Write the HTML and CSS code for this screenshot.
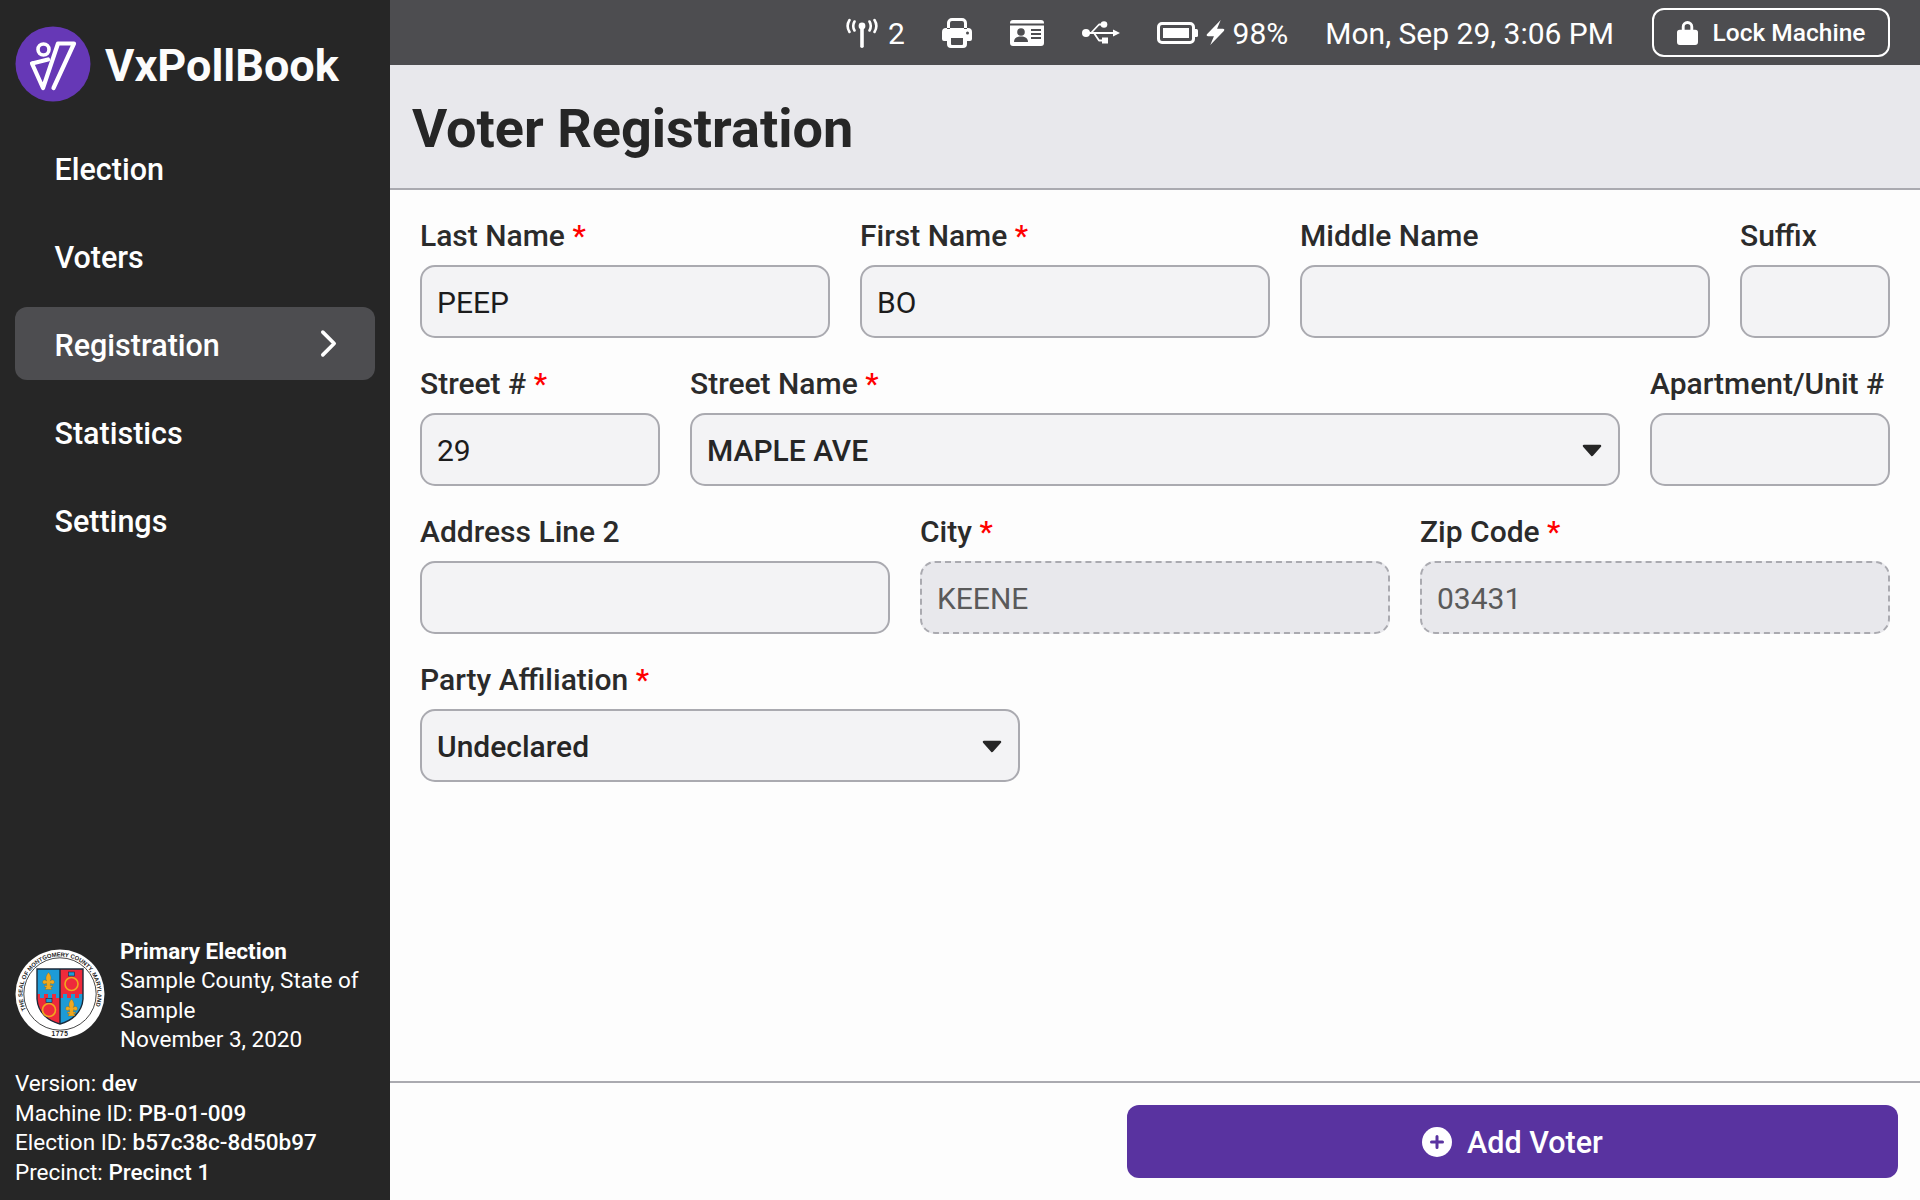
FILE: index.html
```html
<!DOCTYPE html>
<html lang="en">
<head>
<meta charset="utf-8">
<title>VxPollBook</title>
<link rel="stylesheet" href="styles.css">
</head>
<body>
<div class="app">
  <aside class="sidebar">
    <div class="brand">
      <svg class="logo" viewBox="0 0 76 76" width="76" height="76">
        <circle cx="38" cy="38" r="37.5" fill="#6638b6"/>
        <circle cx="28.500" cy="23.500" r="5.500" fill="none" stroke="#fff" stroke-width="3.600"/>
        <path d="M17 37.500 33 33.500M17 37.500 28 62 43 17.500H59L38.500 62" fill="none" stroke="#fff" stroke-width="4.200" stroke-linecap="round" stroke-linejoin="round"/>
      </svg>
      <span class="brand-name">VxPollBook</span>
    </div>
    <nav class="nav">
      <a class="nav-item">Election</a>
      <a class="nav-item">Voters</a>
      <a class="nav-item active">Registration
        <svg viewBox="0 0 20 30" width="19" height="29"><path d="M4 3 16 15 4 27" fill="none" stroke="#fff" stroke-width="3.800" stroke-linecap="round" stroke-linejoin="round"/></svg>
      </a>
      <a class="nav-item">Statistics</a>
      <a class="nav-item">Settings</a>
    </nav>
    <div class="side-foot">
      <div class="election">
        <svg class="seal" viewBox="0 0 90 90" width="90" height="90">
          <defs>
            <path id="sealArc" d="M11 60.800A37.500 37.500 0 1 1 79 60.800"/>
          </defs>
          <circle cx="45" cy="45" r="44.500" fill="#fff"/>
          <circle cx="45" cy="45" r="36.200" fill="none" stroke="#333" stroke-width=".9"/>
          <text class="seal-text"><textPath href="#sealArc" textLength="146">THE SEAL OF MONTGOMERY COUNTY, MARYLAND</textPath></text>
          <text class="seal-year" x="45" y="87" text-anchor="middle">1775</text>
          <path d="M22 20H45V49H41V45H37V49H33V45H29V49H25V45H22Z" fill="#1d9bd7"/>
          <path d="M45 20H68V45H64V49H60V45H56V49H52V45H48V49H45Z" fill="#ee2a3b"/>
          <path d="M22 45H25V49H29V45H33V49H37V45H41V49H45V75C33 72 23 64 22 50Z" fill="#ee2a3b"/>
          <path d="M45 49H48V45H52V49H56V45H60V49H64V45H68V50C67 64 56 72 45 75Z" fill="#1d9bd7"/>
          <path d="M22 20H68V50C67 64 56 72 45 75 33 72 23 64 22 50ZM45 20V75" fill="none" stroke="#1a2a3a" stroke-width="1.400"/>
          <path class="fleur" d="M33.500 23.500C36.500 27 36.500 30 35.200 32 37.500 30 39.800 31 39.300 34 38 35.800 36.200 34.800 35.700 34L35.200 36.500H37.500V38H35.700L37 40.500H30L31.300 38H29.500V36.500H31.800L31.300 34C30.800 34.800 29 35.800 27.700 34 27.200 31 29.500 30 31.800 32 30.500 30 30.500 27 33.500 23.500Z"/>
          <path class="fleur" d="M56.500 50C59.500 53.500 59.500 56.500 58.200 58.500 60.500 56.500 62.800 57.500 62.300 60.500 61 62.300 59.200 61.300 58.700 60.500L58.200 63H60.500V64.500H58.700L60 67H53L54.300 64.500H52.500V63H54.800L54.300 60.500C53.800 61.300 52 62.300 50.700 60.500 50.200 57.500 52.500 56.500 54.800 58.500 53.500 56.500 53.500 53.500 56.500 50Z"/>
          <circle cx="56.500" cy="35" r="6.500" fill="none" stroke="#f0a81e" stroke-width="1.600"/>
          <rect x="53.500" y="23" width="6" height="4" fill="#1d9bd7" stroke="#1a2a3a" stroke-width=".6"/>
          <circle cx="34" cy="61" r="6.500" fill="none" stroke="#f0a81e" stroke-width="1.600"/>
          <rect x="31" y="49.500" width="6" height="4" fill="#1d9bd7" stroke="#1a2a3a" stroke-width=".6"/>
        </svg>
        <div class="election-text">
          <strong>Primary Election</strong><br>
          Sample County, State of Sample<br>
          November 3, 2020
        </div>
      </div>
      <div class="meta">
        <div>Version: <b>dev</b></div>
        <div>Machine ID: <b>PB-01-009</b></div>
        <div>Election ID: <b>b57c38c-8d50b97</b></div>
        <div>Precinct: <b>Precinct 1</b></div>
      </div>
    </div>
  </aside>
  <div class="main">
    <header class="topbar">
      <div class="status">
        <span class="stat-pair">
          <svg viewBox="0 0 34 30" width="34" height="30"><g fill="none" stroke="#fff" stroke-width="2.600" stroke-linecap="round"><path d="M4.500 2C2 6 2 10 4.500 14M9.500 3.500C7.800 6.500 7.800 9.500 9.500 12.500M29.500 2C32 6 32 10 29.500 14M24.500 3.500C26.200 6.500 26.200 9.500 24.500 12.500"/></g><circle cx="17" cy="8" r="3.400" fill="#fff"/><rect x="15.200" y="8" width="3.600" height="22" rx="1.800" fill="#fff"/></svg>
          <span class="stat-text">2</span>
        </span>
        <svg class="nudge" viewBox="0 0 30 30" width="30" height="30"><path fill="#fff" d="M5 11V5a5 5 0 0 1 5-5H20a5 5 0 0 1 5 5V11H22V5a2 2 0 0 0-2-2H10A2 2 0 0 0 8 5V11ZM4 10H26a4 4 0 0 1 4 4V21a2 2 0 0 1-2 2H25V26a4 4 0 0 1-4 4H9a4 4 0 0 1-4-4V23H2a2 2 0 0 1-2-2V14a4 4 0 0 1 4-4ZM9 20V26a1 1 0 0 0 1 1H20a1 1 0 0 0 1-1V20Z" fill-rule="evenodd"/><circle cx="25.500" cy="15" r="1.500" fill="#4d4d50"/></svg>
        <svg viewBox="0 0 34 26" width="34" height="26"><path fill="#fff" d="M3 0H31a3 3 0 0 1 3 3V3.500H0V3a3 3 0 0 1 3-3ZM0 5.500H34V23a3 3 0 0 1-3 3H3a3 3 0 0 1-3-3Z"/><circle cx="11" cy="12" r="3.800" fill="#4d4d50"/><path fill="#4d4d50" d="M4 22C4 18 7 16.500 11 16.500S18 18 18 22ZM21 9H31V11H21ZM21 13H31V15H21ZM21 17H31V19H21Z"/></svg>
        <svg viewBox="0 0 38 23" width="38" height="23"><g fill="none" stroke="#fff" stroke-width="1.800" stroke-linejoin="round"><path d="M3 12H33M9 12 17 3.500H21M12 12 17 19.500H21"/></g><circle cx="4" cy="12" r="4" fill="#fff"/><circle cx="22" cy="3.500" r="3.300" fill="#fff"/><rect x="20" y="16.500" width="6" height="6" fill="#fff"/><path fill="#fff" d="M31 8.500 38 12 31 15.500Z"/></svg>
        <span class="stat-pair battery">
          <svg viewBox="0 0 41 22" width="41" height="22"><rect x="1.500" y="1.500" width="35" height="19" rx="3.500" fill="none" stroke="#fff" stroke-width="3"/><rect x="6" y="6" width="26" height="10" fill="#fff"/><path d="M38 7H39.500A1.500 1.500 0 0 1 41 8.500V13.500A1.500 1.500 0 0 1 39.500 15H38Z" fill="#fff"/></svg>
          <svg viewBox="0 0 18 24" width="19" height="25"><path fill="#fff" d="M14 0 1 13.500C0 14.500.500 15.500 2 15.500H7.500L4 24 17 10.500C18 9.500 17.500 8.500 16 8.500H10.500Z"/></svg>
          <span class="stat-text">98%</span>
        </span>
      </div>
      <span class="clock">Mon, Sep 29, 3:06 PM</span>
      <button class="lock-btn" type="button">
        <svg viewBox="0 0 22 26" width="21" height="25"><path fill="#fff" d="M5 11V7a6 6 0 0 1 12 0v4h-3V7a3 3 0 0 0-6 0v4ZM3 10H19a3 3 0 0 1 3 3V23a3 3 0 0 1-3 3H3a3 3 0 0 1-3-3V13a3 3 0 0 1 3-3Z"/></svg>
        Lock Machine
      </button>
    </header>
    <div class="page-head"><h1>Voter Registration</h1></div>
    <form class="form">
      <div class="row row-name">
        <label class="field"><span class="lbl">Last Name <i>*</i></span><input class="input" value="PEEP"></label>
        <label class="field"><span class="lbl">First Name <i>*</i></span><input class="input" value="BO"></label>
        <label class="field"><span class="lbl">Middle Name</span><input class="input"></label>
        <label class="field"><span class="lbl">Suffix</span><input class="input"></label>
      </div>
      <div class="row row-street">
        <label class="field"><span class="lbl">Street # <i>*</i></span><input class="input" value="29"></label>
        <div class="field"><span class="lbl">Street Name <i>*</i></span><div class="input select">MAPLE AVE<svg class="caret" viewBox="0 0 20 13" width="20" height="13"><path d="M2 2H18L10 11Z" fill="#262626" stroke="#262626" stroke-width="2.500" stroke-linejoin="round"/></svg></div></div>
        <label class="field"><span class="lbl">Apartment/Unit #</span><input class="input"></label>
      </div>
      <div class="row row-city">
        <label class="field"><span class="lbl">Address Line 2</span><input class="input"></label>
        <label class="field"><span class="lbl">City <i>*</i></span><input class="input locked" value="KEENE" disabled></label>
        <label class="field"><span class="lbl">Zip Code <i>*</i></span><input class="input locked" value="03431" disabled></label>
      </div>
      <div class="row row-party">
        <div class="field"><span class="lbl">Party Affiliation <i>*</i></span><div class="input select">Undeclared<svg class="caret" viewBox="0 0 20 13" width="20" height="13"><path d="M2 2H18L10 11Z" fill="#262626" stroke="#262626" stroke-width="2.500" stroke-linejoin="round"/></svg></div></div>
      </div>
    </form>
    <footer class="actions">
      <button class="add-btn" type="button">
        <svg viewBox="0 0 30 30" width="30" height="30"><circle cx="15" cy="15" r="15" fill="#fff"/><path d="M15 9.500V20.500M9.500 15H20.500" stroke="#5933a0" stroke-width="3" stroke-linecap="round"/></svg>
        <span class="add-label">Add Voter</span>
      </button>
    </footer>
  </div>
</div>
</body>
</html>
```
FILE: styles.css
```css
* { box-sizing: border-box; }
html, body { margin: 0; height: 100%; }
body { font-family: Roboto, "Noto Sans", sans-serif; color: #262626; background: #fdfdfd; }
.app { display: flex; width: 1920px; height: 1200px; overflow: hidden; }

.sidebar { width: 390px; flex: none; background: #262626; color: #fff; display: flex; flex-direction: column; padding: 26px 15px 13px; }
.brand { display: flex; align-items: center; gap: 14px; height: 75px; }
.logo { flex: none; }
.brand-name { font-size: 45px; font-weight: 700; color: #fcfcfc; margin-top: 4px; }
.nav { display: flex; flex-direction: column; gap: 15px; margin-top: 30px; }
.nav-item { height: 73px; padding: 3px 37px 0 39.500px; border-radius: 12px; display: flex; align-items: center; justify-content: space-between; font-size: 30.500px; font-weight: 500; }
.nav-item svg { margin-top: -3px; }
.nav-item.active { background: #4d4d50; }
.side-foot { margin-top: auto; font-size: 22.500px; line-height: 29.400px; }
.election { display: flex; align-items: center; gap: 15px; margin-bottom: 15px; }
.seal { flex: none; margin-bottom: 3px; }
.seal-text { font: 700 5.900px "Liberation Sans", sans-serif; fill: #222; }
.seal-year { font: 700 6.500px "Liberation Sans", sans-serif; fill: #222; letter-spacing: .6px; }
.fleur { fill: #f0a81e; stroke: #7a5a10; stroke-width: .3; }
.election-text strong { font-weight: 700; }
.meta b { font-weight: 500; }

.main { flex: 1; min-width: 0; display: flex; flex-direction: column; }
.topbar { height: 65px; flex: none; background: #4d4d50; color: #fff; display: flex; align-items: center; justify-content: flex-end; padding: 0 30px; font-size: 30px; font-weight: 400; }
.status { display: flex; align-items: center; gap: 38px; }
.nudge { margin-left: -1.200px; }
.stat-pair { display: flex; align-items: center; gap: 9px; }
.stat-text { padding-top: 2px; }
.battery { gap: 8px; margin-left: -1.200px; }
.clock { margin-left: 37px; padding-top: 2px; }
.lock-btn { margin-left: 38px; width: 238px; height: 49px; flex: none; display: flex; align-items: center; justify-content: center; gap: 15px; border: 2px solid #fff; border-radius: 12px; background: transparent; color: #fff; font: 500 24.500px Roboto, sans-serif; padding: 0; }

.page-head { height: 125px; flex: none; background: #e8e8ec; border-bottom: 2px solid #aaaab0; display: flex; align-items: center; padding: 3px 0 0 22px; }
.page-head h1 { margin: 0; font-size: 54px; font-weight: 700; color: #262626; }

.form { flex: 1; padding: 24px 30px 0; display: flex; flex-direction: column; gap: 24px; }
.row { display: grid; gap: 30px; }
.row-name { grid-template-columns: 410px 410px 410px 150px; }
.row-street { grid-template-columns: 240px 930px 240px; }
.row-city { grid-template-columns: 470px 470px 470px; }
.row-party { grid-template-columns: 600px; }
.field { display: flex; flex-direction: column; min-width: 0; }
.lbl { font-size: 30px; font-weight: 500; line-height: 44px; margin-bottom: 7px; color: #2b2b2b; white-space: nowrap; }
.lbl i { font-style: normal; color: #f00; }
.input { width: 100%; height: 73px; flex: none; border: 2px solid #aaaab0; border-radius: 15px; background: #f3f3f5; font: 400 30px Roboto, sans-serif; color: #1c1c1c; padding: 2px 15px 0; outline: none; }
.select { display: flex; align-items: center; justify-content: space-between; font-weight: 500; padding-right: 16.500px; color: #262626; }
.caret { flex: none; margin-top: -1px; }
.locked { background: #e8e8ec; border-style: dashed; color: #5a5a5a; -webkit-text-fill-color: #5a5a5a; opacity: 1; }

.actions { height: 119px; flex: none; border-top: 2px solid #aaaab0; display: flex; justify-content: flex-end; align-items: flex-start; padding: 22px 22px 0 0; }
.add-btn { width: 771px; height: 73px; display: flex; align-items: center; justify-content: center; gap: 15px; border: 0; border-radius: 12px; background: #5933a0; color: #fff; font: 500 30.500px Roboto, sans-serif; padding: 0; }
.add-label { padding-top: 2px; }
```
